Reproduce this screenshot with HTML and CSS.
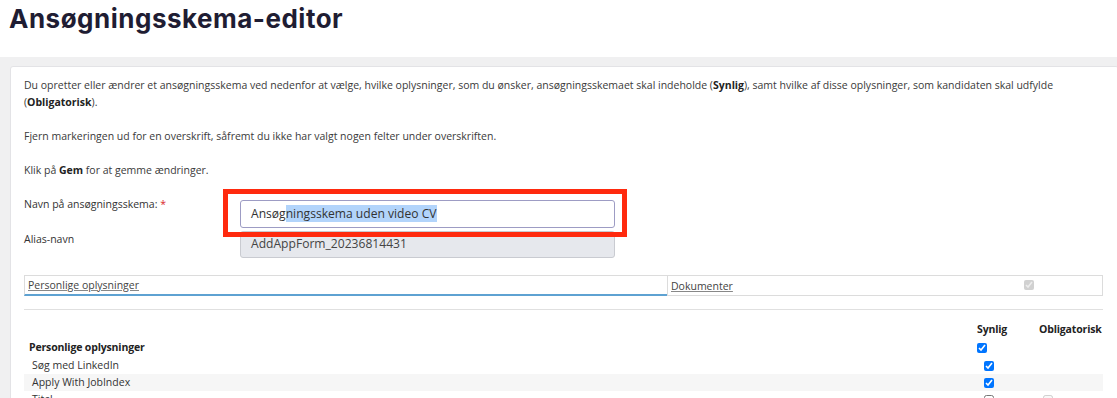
FILE: index.html
```html
<!DOCTYPE html>
<html lang="da">
<head>
    <meta charset="UTF-8">
    <meta name="viewport" content="width=device-width, initial-scale=1.0">
    <title>Ansøgningsskema-editor</title>
    <link rel="stylesheet" href="styles.css">
</head>
<body>
    <div class="page-head">
        <h1>Ansøgningsskema-editor</h1>
    </div>

    <div class="page-body">
        <div class="panel">
            <p>Du opretter eller ændrer et ansøgningsskema ved nedenfor at vælge, hvilke oplysninger, som du ønsker, ansøgningsskemaet skal indeholde (<b>Synlig</b>), samt hvilke af disse oplysninger, som kandidaten skal udfylde (<b>Obligatorisk</b>).</p>
            <p>Fjern markeringen ud for en overskrift, såfremt du ikke har valgt nogen felter under overskriften.</p>
            <p>Klik på <b>Gem</b> for at gemme ændringer.</p>

            <div class="form-row first">
                <label class="form-label">Navn på ansøgningsskema: <span class="req">*</span></label>
                <div class="field-wrap">
                    <div class="text-field">Ansøg<span class="sel">ningsskema uden video CV</span></div>
                    <div class="mark-box"></div>
                </div>
            </div>
            <div class="form-row">
                <label class="form-label">Alias-navn</label>
                <div class="field-wrap">
                    <div class="text-field readonly">AddAppForm_20236814431</div>
                </div>
            </div>

            <div class="tabs">
                <div class="tab active"><a href="#">Personlige oplysninger</a></div>
                <div class="tab"><a href="#">Dokumenter</a><input type="checkbox" checked disabled></div>
            </div>

            <hr class="divider">

            <div class="fields">
                <div class="field-row head">
                    <span></span>
                    <span>Synlig</span>
                    <span>Obligatorisk</span>
                </div>
                <div class="field-row group">
                    <span>Personlige oplysninger</span>
                    <span><input type="checkbox" checked></span>
                    <span></span>
                </div>
                <div class="field-row item">
                    <span>Søg med LinkedIn</span>
                    <span><input type="checkbox" checked></span>
                    <span></span>
                </div>
                <div class="field-row item alt">
                    <span>Apply With JobIndex</span>
                    <span><input type="checkbox" checked></span>
                    <span></span>
                </div>
                <div class="field-row item">
                    <span>Titel</span>
                    <span><input type="checkbox"></span>
                    <span><input type="checkbox" disabled></span>
                </div>
            </div>
        </div>
    </div>
</body>
</html>
```

FILE: styles.css
```css
html, body {
    margin: 0;
    padding: 0;
    overflow: hidden;
}
body {
    font-family: "Open Sans", "DejaVu Sans", sans-serif;
    font-size: 10.5px;
    line-height: 17px;
    color: #3a3a3a;
    background-color: #f0f0f1;
}
.page-head {
    background-color: #fff;
    height: 54px;
    padding: 3px 9px 0;
}
.page-head h1 {
    margin: 0;
    font-family: Inter, "Liberation Sans", sans-serif;
    font-size: 26px;
    line-height: 32px;
    font-weight: 700;
    letter-spacing: 0.5px;
    color: #1f1d33;
}
.page-body {
    padding: 9px 0 0 10px;
}
.panel {
    background-color: #fff;
    border: 1px solid #e3e3e6;
    border-radius: 3px;
    margin-right: -2px;
    padding: 10px 15px 20px 13px;
}
.panel p {
    margin: 0 0 17px;
}
.panel b {
    color: #222;
}

/* form */
.form-row {
    display: flex;
    align-items: flex-start;
    margin-top: 3px;
}
.form-row.first {
    margin-top: 1px;
}
.form-label {
    width: 216px;
    color: #333;
}
.req {
    color: #d9262c;
}
.field-wrap {
    position: relative;
    width: 375px;
}
.form-row.first .field-wrap {
    margin-top: 4px;
}
.text-field {
    box-sizing: border-box;
    height: 28px;
    padding: 4px 10px;
    border: 1.5px solid #9d9cc4;
    border-radius: 3px;
    background: #fff;
    font-size: 12.1px;
    line-height: 17px;
    color: #333;
}
.text-field .sel {
    background-color: #b2d4fb;
}
.text-field.readonly {
    height: 27px;
    border: 1px solid #c9cbd1;
    background-color: #e6e8ed;
    padding: 3px 10px;
    color: #444;
}
.mark-box {
    position: absolute;
    left: -17px;
    top: -11px;
    width: 394px;
    height: 38px;
    border: 5px solid #ff2a0e;
    z-index: 2;
}

/* tabs */
.tabs {
    display: flex;
    margin-top: 17px;
}
.tab {
    display: flex;
    align-items: center;
    height: 18px;
    padding: 1px 3px 0;
    border: 1px solid #dcdcdc;
}
.tab a {
    color: #444;
    text-decoration: underline;
    text-decoration-color: #888;
}
.tab.active {
    width: 636px;
    border-right: none;
    border-bottom: 2px solid #5ea2d2;
    height: 17px;
}
.tab:last-child {
    flex: 1;
    justify-content: space-between;
}
.tab input {
    width: 10px;
    height: 10px;
    margin: 0 65px 2px 0;
}
.divider {
    border: none;
    border-top: 1px solid #e0e0e0;
    margin: 13px 0 0;
}

/* field list */
.fields {
    margin-top: 11px;
}
.field-row {
    display: grid;
    grid-template-columns: 1fr 62px 64px;
    align-items: center;
    height: 17px;
    color: #333;
}
.field-row.head,
.field-row.group {
    font-weight: 700;
    color: #222;
    letter-spacing: -0.15px;
}
.field-row.group {
    height: 19px;
    padding-left: 5px;
}
.field-row.item span:first-child {
    padding-left: 8px;
}
.field-row.alt {
    background-color: #f6f6f6;
}
.field-row input {
    display: block;
    width: 10px;
    height: 10px;
    margin: 0;
}
.field-row.item span:nth-child(2) input {
    margin-left: 7px;
}
.field-row span:nth-child(3) input {
    margin-left: 4px;
}
```
